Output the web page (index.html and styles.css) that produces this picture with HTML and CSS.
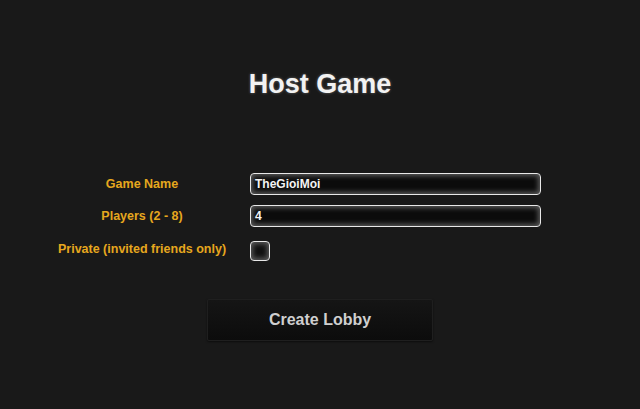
FILE: index.html
```html
<!DOCTYPE html>
<html>
<head>
<meta charset="utf-8">
<link rel="stylesheet" href="styles.css">
</head>
<body>
<div class="page">
  <h1 class="title">Host Game</h1>
  <div class="form">
    <label class="label">Game Name</label>
    <div class="field"><div class="input">TheGioiMoi</div></div>
    <label class="label">Players (2 - 8)</label>
    <div class="field"><div class="input">4</div></div>
    <label class="label">Private (invited friends only)</label>
    <div class="field"><div class="check"></div></div>
  </div>
  <div class="actions"><button class="btn">Create Lobby</button></div>
</div>
</body>
</html>
```

FILE: styles.css
```css
html, body {
  margin: 0;
  padding: 0;
  background: #191919;
  width: 640px;
  height: 409px;
  overflow: hidden;
}
.page {
  font-family: "Liberation Sans", Arial, sans-serif;
  display: flex;
  flex-direction: column;
  align-items: stretch;
}
.title {
  margin: 68px 0 0 0;
  text-align: center;
  color: #f2f2f2;
  font-size: 27px;
  font-weight: bold;
  line-height: 32px;
  text-shadow: 0 0 3px rgba(255,255,255,0.35);
}
.form {
  margin-top: 73px;
  margin-left: 42px;
  display: grid;
  grid-template-columns: 200px 291px;
  column-gap: 8px;
  row-gap: 10px;
  align-items: center;
}
.label {
  text-align: center;
  color: #e6a71e;
  font-size: 12.5px;
  font-weight: bold;
  line-height: 22px;
}
.field {
  display: flex;
}
.input {
  box-sizing: border-box;
  width: 291px;
  height: 22px;
  border: 1px solid #e8e8e8;
  border-radius: 4px;
  background: #0b0b0b;
  box-shadow: inset 0 0 5px 2px #5a5a5a;
  color: #f4f4f4;
  font-size: 12px;
  font-weight: bold;
  line-height: 20px;
  padding-left: 4px;
}
.check {
  box-sizing: border-box;
  width: 20px;
  height: 20px;
  margin: 4px 0 0 0;
  border: 1px solid #e8e8e8;
  border-radius: 4px;
  background: #111;
  box-shadow: inset 0 0 5px 2px #5a5a5a;
}
.actions {
  margin-top: 38px;
  display: flex;
  justify-content: center;
}
.btn {
  width: 226px;
  height: 42px;
  border: 1px solid #1f1f1f;
  border-radius: 2px;
  background: linear-gradient(#151515, #0c0c0c);
  box-shadow: 0 1px 2px rgba(0,0,0,0.5);
  color: #cfcfcf;
  font-family: "Liberation Sans", Arial, sans-serif;
  font-size: 16px;
  font-weight: bold;
  padding: 0;
}
```
